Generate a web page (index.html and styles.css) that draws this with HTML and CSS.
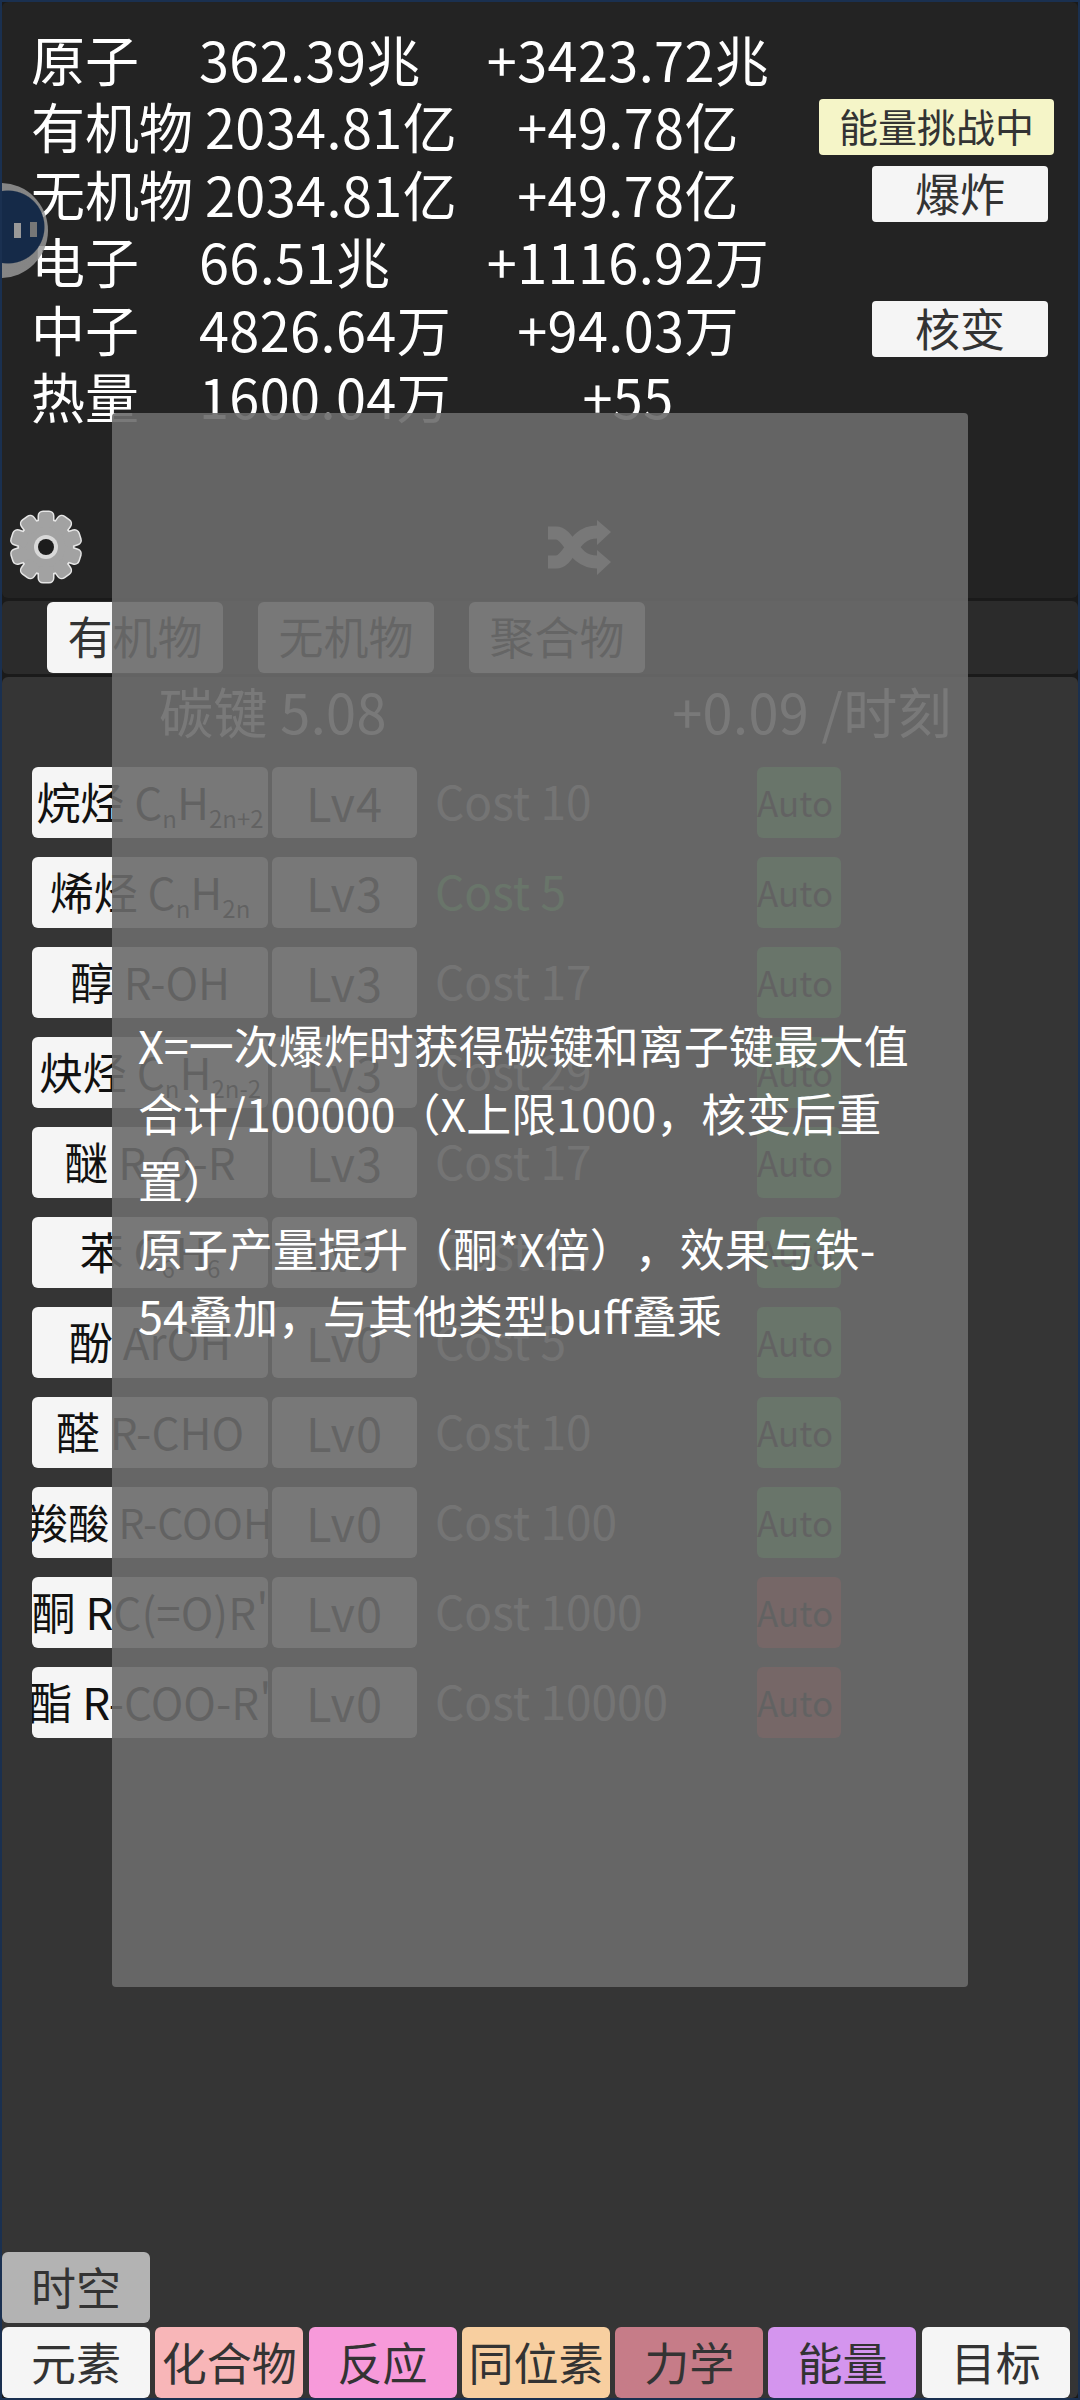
FILE: index.html
```html
<!DOCTYPE html>
<html lang="zh">
<head>
    <meta charset="UTF-8">
    <meta name="viewport" content="width=device-width, initial-scale=1.0">
    <title>原子</title>
    <link rel="stylesheet" href="styles.css">
</head>
<body>

    <div class="app">
        <section class="top-panel">
            <div class="stat-row"><span>原子</span><span>362.39兆</span><span class="delta">+3423.72兆</span><span></span></div>
            <div class="stat-row"><span>有机物</span><span>2034.81亿</span><span class="delta">+49.78亿</span><button class="act act-wide">能量挑战中</button></div>
            <div class="stat-row"><span>无机物</span><span>2034.81亿</span><span class="delta">+49.78亿</span><button class="act">爆炸</button></div>
            <div class="stat-row"><span>电子</span><span>66.51兆</span><span class="delta">+1116.92万</span><span></span></div>
            <div class="stat-row"><span>中子</span><span>4826.64万</span><span class="delta">+94.03万</span><button class="act">核变</button></div>
            <div class="stat-row"><span>热量</span><span>1600.04万</span><span class="delta">+55</span><span></span></div>

            <div class="tools">
                <svg class="gear" viewBox="0 0 76 76">
                    <defs>
                        <g id="cog">
                            <circle cx="38" cy="38" r="27"/>
                            <rect x="31" y="3" width="14" height="16" rx="4"/>
                            <rect x="31" y="3" width="14" height="16" rx="4" transform="rotate(36 38 38)"/>
                            <rect x="31" y="3" width="14" height="16" rx="4" transform="rotate(72 38 38)"/>
                            <rect x="31" y="3" width="14" height="16" rx="4" transform="rotate(108 38 38)"/>
                            <rect x="31" y="3" width="14" height="16" rx="4" transform="rotate(144 38 38)"/>
                            <rect x="31" y="3" width="14" height="16" rx="4" transform="rotate(180 38 38)"/>
                            <rect x="31" y="3" width="14" height="16" rx="4" transform="rotate(216 38 38)"/>
                            <rect x="31" y="3" width="14" height="16" rx="4" transform="rotate(252 38 38)"/>
                            <rect x="31" y="3" width="14" height="16" rx="4" transform="rotate(288 38 38)"/>
                            <rect x="31" y="3" width="14" height="16" rx="4" transform="rotate(324 38 38)"/>
                        </g>
                    </defs>
                    <use href="#cog" fill="#e6e6e6" stroke="#e6e6e6" stroke-width="3"/>
                    <use href="#cog" fill="#a2a2a2"/>
                    <circle cx="38" cy="38" r="12" fill="#d8d8d8"/>
                    <circle cx="38" cy="38" r="8" fill="#1c1c1c"/>
                </svg>
                <svg class="shuffle" viewBox="0 0 63 55">
                    <path d="M0 42h8C22 42 24 12 49 12" fill="none" stroke="#eee" stroke-width="13"/>
                    <path d="M0 13h8C22 13 24 42 49 42" fill="none" stroke="#eee" stroke-width="13"/>
                    <path d="M49 0L63 12 49 25zM49 30L63 42 49 55z" fill="#eee"/>
                </svg>
            </div>
        </section>

        <nav class="sub-tabs">
            <button class="btn sub-tab">有机物</button>
            <button class="btn sub-tab">无机物</button>
            <button class="btn sub-tab">聚合物</button>
        </nav>

        <section class="main-panel">
            <div class="bond-head"><span>碳键 5.08</span><span>+0.09 /时刻</span></div>

            <div class="rows">
                <div class="row"><button class="btn name"><span>烷烃 C<sub>n</sub>H<sub>2n+2</sub></span></button><button class="btn lv">Lv4</button><span class="cost">Cost 10</span><button class="btn auto">Auto</button></div>
                <div class="row"><button class="btn name"><span>烯烃 C<sub>n</sub>H<sub>2n</sub></span></button><button class="btn lv">Lv3</button><span class="cost can-buy">Cost 5</span><button class="btn auto">Auto</button></div>
                <div class="row"><button class="btn name"><span>醇 R-OH</span></button><button class="btn lv">Lv3</button><span class="cost">Cost 17</span><button class="btn auto">Auto</button></div>
                <div class="row"><button class="btn name"><span>炔烃 C<sub>n</sub>H<sub>2n-2</sub></span></button><button class="btn lv">Lv3</button><span class="cost">Cost 29</span><button class="btn auto">Auto</button></div>
                <div class="row"><button class="btn name"><span>醚 R-O-R</span></button><button class="btn lv">Lv3</button><span class="cost">Cost 17</span><button class="btn auto">Auto</button></div>
                <div class="row"><button class="btn name"><span>苯 C<sub>6</sub>H<sub>6</sub></span></button><button class="btn lv">Lv3</button><span class="cost">Cost 29</span><button class="btn auto">Auto</button></div>
                <div class="row"><button class="btn name"><span>酚 ArOH</span></button><button class="btn lv">Lv0</button><span class="cost">Cost 5</span><button class="btn auto">Auto</button></div>
                <div class="row"><button class="btn name"><span>醛 R-CHO</span></button><button class="btn lv">Lv0</button><span class="cost">Cost 10</span><button class="btn auto">Auto</button></div>
                <div class="row"><button class="btn name name-long"><span>羧酸 R-COOH</span></button><button class="btn lv">Lv0</button><span class="cost">Cost 100</span><button class="btn auto">Auto</button></div>
                <div class="row"><button class="btn name"><span>酮 RC(=O)R'</span></button><button class="btn lv">Lv0</button><span class="cost">Cost 1000</span><button class="btn auto auto-off">Auto</button></div>
                <div class="row"><button class="btn name"><span>酯 R-COO-R'</span></button><button class="btn lv">Lv0</button><span class="cost">Cost 10000</span><button class="btn auto auto-off">Auto</button></div>
            </div>

            <div class="bottom-tabs">
                <button class="tab tab-time">时空</button>
                <button class="tab">元素</button>
                <button class="tab tab-compound">化合物</button>
                <button class="tab tab-react">反应</button>
                <button class="tab tab-isotope">同位素</button>
                <button class="tab tab-force">力学</button>
                <button class="tab tab-energy">能量</button>
                <button class="tab">目标</button>
            </div>
        </section>

        <div class="float-ball"><i></i><i></i></div>

        <div class="tip">
            <p>X=一次爆炸时获得碳键和离子键最大值合计/100000（X上限1000，核变后重置）<br>原子产量提升（酮*X倍），效果与铁-<wbr>54叠加，与其他类型buff叠乘</p>
        </div>
    </div>

</body>
</html>
```

FILE: styles.css
```css
* {
    margin: 0;
    padding: 0;
    box-sizing: border-box;
}

html, body {
    height: 100%;
}

body {
    font-family: 'Noto Sans CJK SC', 'Noto Sans', sans-serif;
    background: #1a1a1a;
    color: #fff;
    overflow: hidden;
    text-spacing-trim: space-all;
}

button {
    font-family: inherit;
    border: none;
}

.app {
    position: relative;
    width: 1080px;
    height: 2400px;
    border: 2px solid #1a3050;
    display: flex;
    flex-direction: column;
    overflow: hidden;
}

/* top stats */
.top-panel {
    height: 596px;
    background: #232323;
    border-radius: 6px;
    padding-top: 23px;
    font-size: 54px;
}

.stat-row {
    display: grid;
    grid-template-columns: minmax(168px, auto) 1fr 312px 296px;
    height: 67.4px;
    line-height: 67.4px;
    padding-left: 29px;
    white-space: nowrap;
    letter-spacing: 0.4px;
}

.stat-row span:first-child {
    padding-right: 12px;
    letter-spacing: 0;
}

.delta {
    padding-left: 4px;
    text-align: center;
}

.act {
    align-self: center;
    justify-self: end;
    width: 176px;
    height: 56px;
    margin: 2px 30px 0 0;
    padding-bottom: 3px;
    background: #f5f5f5;
    color: #333;
    font-size: 45px;
    line-height: 53px;
    border-radius: 4px;
}

.act-wide {
    width: 235px;
    margin-right: 24px;
    background: #f5f5c8;
    font-size: 39px;
}

.tools {
    display: flex;
    align-items: center;
    height: 76px;
    margin-top: 80px;
    padding-left: 6px;
}

.gear {
    width: 76px;
    height: 76px;
}

.shuffle {
    width: 63px;
    height: 55px;
    margin-left: 464px;
}

/* sub tabs */
.sub-tabs {
    display: flex;
    gap: 35px;
    height: 73px;
    padding: 1px 0 0 45px;
    background: #2b2b2b;
    border-radius: 6px;
    margin-top: 3px;
}

.btn {
    background: #f5f5f5;
    color: #111;
    border-radius: 6px;
}

.sub-tab {
    width: 176px;
    height: 71px;
    padding-bottom: 4px;
    font-size: 45px;
    color: #333;
}

/* main panel */
.main-panel {
    flex: 1;
    display: flex;
    flex-direction: column;
    background: #353535;
    border-radius: 6px;
    margin-top: 3px;
}

.bond-head {
    display: flex;
    justify-content: space-between;
    padding: 0 126px 0 157px;
    font-size: 54px;
    height: 72px;
    line-height: 68px;
    letter-spacing: 0.4px;
}

.rows {
    display: flex;
    flex-direction: column;
    gap: 19px;
    margin-top: 18px;
    padding-left: 30px;
}

.row {
    display: flex;
    align-items: center;
    height: 71px;
}

.name {
    display: flex;
    align-items: center;
    justify-content: center;
    width: 236px;
    height: 71px;
    padding-bottom: 4px;
    font-size: 44px;
    white-space: nowrap;
    overflow: hidden;
}

.name span {
    flex: none;
}

.name-long {
    font-size: 41px;
}

.name sub {
    font-size: 24px;
    vertical-align: -8px;
    line-height: 0;
}

.lv {
    width: 145px;
    height: 71px;
    margin-left: 4px;
    padding-bottom: 4px;
    font-size: 47px;
    letter-spacing: 1px;
    color: #222;
}

.cost {
    width: 322px;
    margin-left: 18px;
    padding-bottom: 5px;
    font-size: 46px;
    color: #ccc;
}

.cost.can-buy {
    color: #55d060;
}

.auto {
    width: 84px;
    height: 71px;
    padding: 0 10px 3px 0;
    background: #55d060;
    color: #111;
    font-size: 35px;
    white-space: nowrap;
}

.auto-off {
    background: #d84040;
}

/* bottom tabs */
.bottom-tabs {
    margin-top: auto;
    display: grid;
    grid-template-columns: repeat(7, 148px);
    gap: 4px 5.3px;
}

.tab {
    height: 71px;
    padding-bottom: 3px;
    background: #f5f5f5;
    color: #333;
    font-size: 45px;
    border-radius: 6px;
}

.tab-time {
    grid-column: 1 / -1;
    width: 148px;
    background: #b3b3b3;
}

.tab-compound { background: #f8b6b8; }
.tab-react { background: #f79ada; }
.tab-isotope { background: #f8cfa0; }
.tab-force { background: #c67c88; }
.tab-energy { background: #d495ee; }

/* floating ball at the screen edge */
.float-ball {
    position: absolute;
    left: -49px;
    top: 181px;
    width: 95px;
    height: 95px;
    border-radius: 50%;
    background: radial-gradient(circle 37px at 55px 44px, #152a48 97%, rgba(150, 150, 150, 0.85) 100%);
    display: flex;
    align-items: center;
    justify-content: flex-end;
    gap: 9px;
    padding: 0 11px 0 0;
}

.float-ball i {
    width: 7px;
    height: 15px;
    background: #999;
}

.float-ball i:last-child {
    background: #777;
    margin-top: -3px;
}

/* tooltip overlay */
.tip {
    position: absolute;
    left: 110px;
    top: 411px;
    width: 856px;
    height: 1574px;
    background: rgba(107, 107, 107, 0.907);
    border-radius: 4px;
    display: flex;
    align-items: center;
    padding: 0 50px 40px 26px;
    font-size: 45px;
    line-height: 67.6px;
}
```
